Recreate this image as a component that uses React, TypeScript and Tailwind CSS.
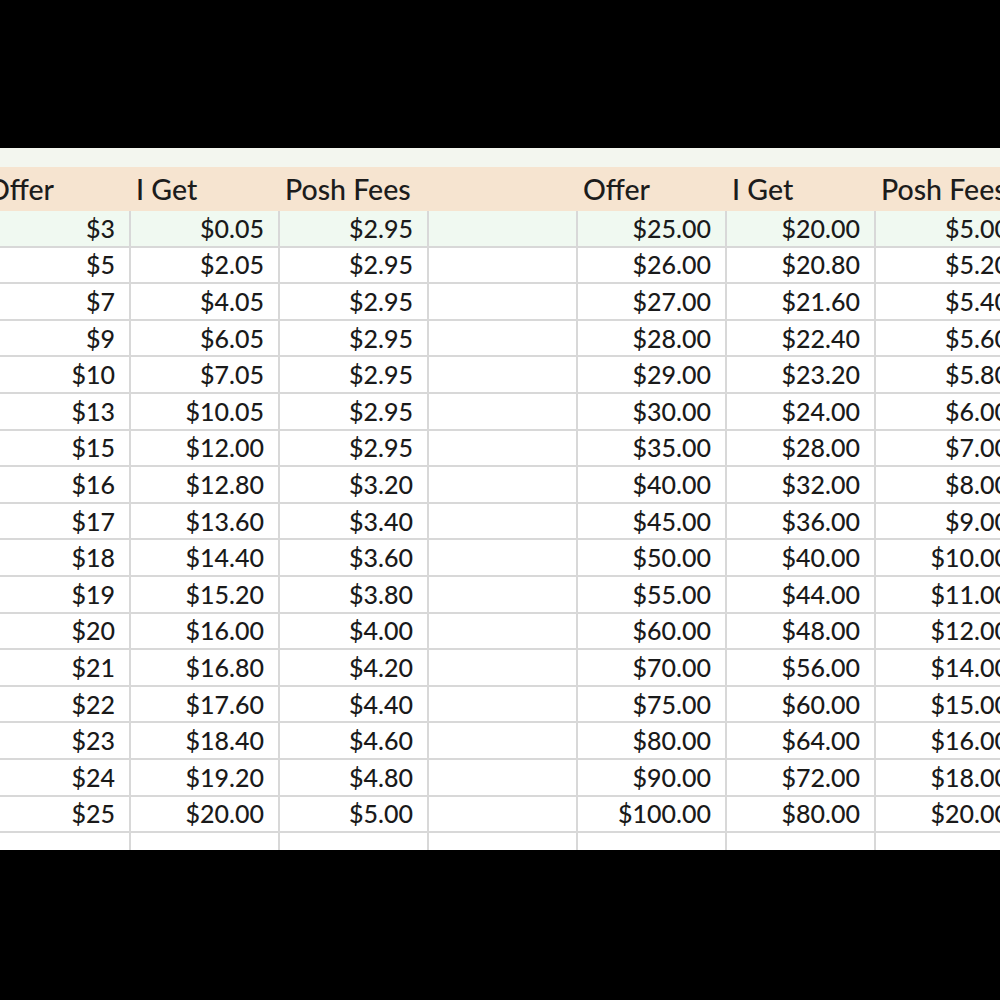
import React from "react";

const left: [string, string, string][] = [
  ["$3", "$0.05", "$2.95"],
  ["$5", "$2.05", "$2.95"],
  ["$7", "$4.05", "$2.95"],
  ["$9", "$6.05", "$2.95"],
  ["$10", "$7.05", "$2.95"],
  ["$13", "$10.05", "$2.95"],
  ["$15", "$12.00", "$2.95"],
  ["$16", "$12.80", "$3.20"],
  ["$17", "$13.60", "$3.40"],
  ["$18", "$14.40", "$3.60"],
  ["$19", "$15.20", "$3.80"],
  ["$20", "$16.00", "$4.00"],
  ["$21", "$16.80", "$4.20"],
  ["$22", "$17.60", "$4.40"],
  ["$23", "$18.40", "$4.60"],
  ["$24", "$19.20", "$4.80"],
  ["$25", "$20.00", "$5.00"],
];

const offers = [25, 26, 27, 28, 29, 30, 35, 40, 45, 50, 55, 60, 70, 75, 80, 90, 100];
const right: [string, string, string][] = offers.map((o) => [
  "$" + o.toFixed(2),
  "$" + (o * 0.8).toFixed(2),
  "$" + (o * 0.2).toFixed(2),
]);

const headers = ["Offer", "I Get", "Posh Fees", "", "Offer", "I Get", "Posh Fees"];

export default function App() {
  const rows = left.map((l, i) => [...l, "", ...right[i]]);
  return (
    <div
      className="w-[1000px] h-[1000px] bg-black overflow-hidden"
      style={{ fontFamily: "Lato, 'Open Sans', sans-serif" }}
    >
      <div className="h-[148px]" />
      <div className="h-[702px] bg-white overflow-hidden">
        <div className="h-[19px] bg-[#f3f6ef]" />
        <div className="ml-[-18px] w-[1043px]">
          <div className="grid grid-cols-[repeat(7,149px)] h-[44px] bg-[#f6e4d0]">
            {headers.map((h, i) => (
              <div
                key={i}
                className="flex items-center pl-[5px] text-[28.5px] font-medium text-[#1c1c1c] whitespace-nowrap leading-none"
              >
                {h}
              </div>
            ))}
          </div>
          {rows.map((r, ri) => (
            <div
              key={ri}
              className={
                "grid grid-cols-[repeat(7,149px)] h-[36.6px] " +
                (ri === 0 ? "bg-[#f0f9f1]" : "bg-white")
              }
            >
              {r.map((c, ci) => (
                <div
                  key={ci}
                  className="flex items-center justify-end pr-[14px] border-r-2 border-b-2 border-[#d8d8d8] text-[25px] font-medium text-[#1a1a1a] whitespace-nowrap leading-none"
                >
                  {c}
                </div>
              ))}
            </div>
          ))}
          <div className="grid grid-cols-[repeat(7,149px)] h-[30px] bg-white">
            {headers.map((_, ci) => (
              <div key={ci} className="border-r-2 border-[#d8d8d8]" />
            ))}
          </div>
        </div>
      </div>
    </div>
  );
}
